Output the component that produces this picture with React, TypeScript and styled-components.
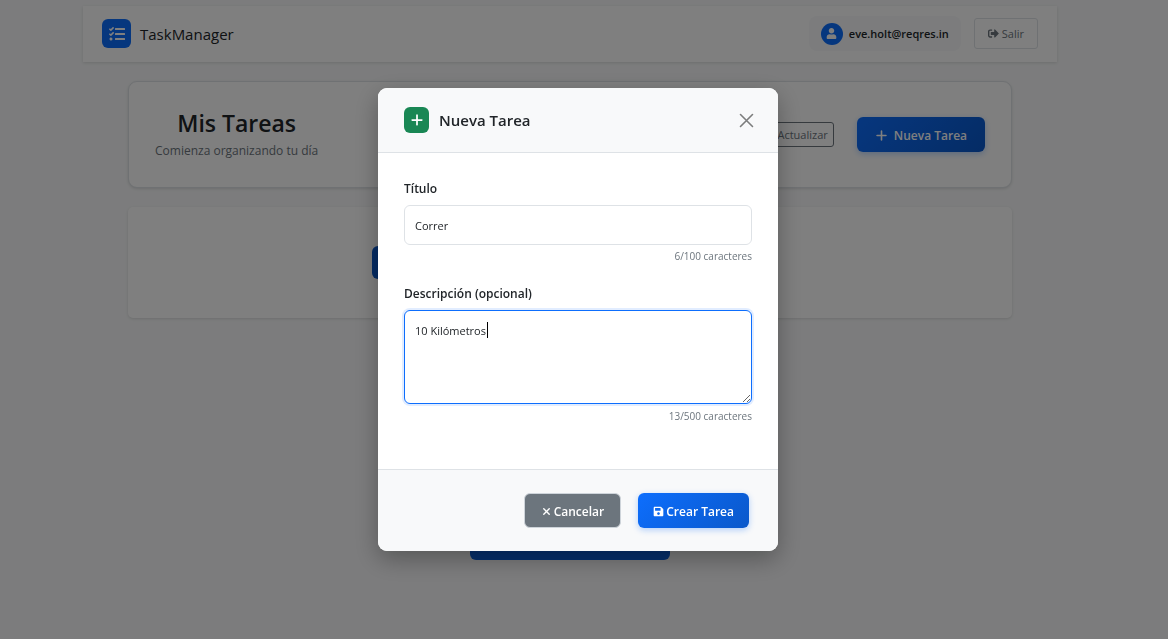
import { useEffect, useRef, useState } from "react";
import styled, { createGlobalStyle } from "styled-components";
import { FaSave, FaSignOutAlt, FaSyncAlt, FaTasks, FaUser } from "react-icons/fa";
import { FaPlus, FaXmark } from "react-icons/fa6";

const GlobalStyle = createGlobalStyle`
  *, *::before, *::after { box-sizing: border-box; }
  body {
    margin: 0;
    background: #f8f9fa;
    color: #212529;
    font-family: "Open Sans", "Noto Sans", sans-serif;
    font-size: 12px;
    line-height: 20px;
  }
  h1, h2, p { margin: 0; }
  button, input, textarea { font: inherit; color: inherit; }
  button { cursor: pointer; white-space: nowrap; }
`;

const Page = styled.div`
  min-height: 100vh;
  padding: 6px 28px 0 0;
`;

const TopBar = styled.header`
  display: flex;
  align-items: center;
  justify-content: space-between;
  max-width: 974px;
  margin: 0 auto 19px;
  padding: 10px 19px 11px;
  background: #fff;
  box-shadow: 0 1px 3px rgba(0, 0, 0, 0.12);
`;

const Group = styled.div<{ $gap: number }>`
  display: flex;
  align-items: center;
  gap: ${(p) => p.$gap}px;
`;

const LogoMark = styled.span`
  display: grid;
  place-items: center;
  width: 29px;
  height: 29px;
  border-radius: 6px;
  background: #0d6efd;
  color: #fff;
  font-size: 16px;
`;

const Brand = styled.span`
  padding-top: 1px;
  font-size: 15px;
  font-weight: 500;
`;

const UserPill = styled.div`
  display: flex;
  align-items: center;
  gap: 6px;
  height: 35px;
  padding: 0 12px;
  border-radius: 8px;
  background: #f8f9fa;
  font-size: 11px;
  font-weight: 600;
`;

const Avatar = styled.span`
  display: grid;
  place-items: center;
  width: 22px;
  height: 22px;
  border-radius: 50%;
  background: #0d6efd;
  color: #fff;
  font-size: 11px;
`;

const LogoutButton = styled.button`
  display: flex;
  align-items: center;
  gap: 3px;
  height: 31px;
  padding: 0 13px;
  border: 1px solid #dee2e6;
  border-radius: 3px;
  background: transparent;
  color: #6c757d;
  font-size: 11px;
`;

const Main = styled.main`
  max-width: 884px;
  margin: 0 auto;
`;

const HeroCard = styled.section`
  display: flex;
  align-items: center;
  justify-content: space-between;
  min-height: 107px;
  padding: 0 26px;
  border: 1px solid #dee2e6;
  border-radius: 9px;
  background: #fff;
  box-shadow: 0 1px 3px rgba(0, 0, 0, 0.12);
`;

const HeroTitle = styled.h1`
  font-size: 23px;
  font-weight: 600;
  line-height: 32px;
  text-align: center;
`;

const HeroText = styled.p`
  color: #6c757d;
  font-size: 12px;
  line-height: 24px;
`;

const RefreshButton = styled.button`
  display: flex;
  align-items: center;
  gap: 4px;
  height: 25px;
  padding: 0 5px;
  border: 1px solid #6c757d;
  border-radius: 3px;
  background: transparent;
  color: #6c757d;
  font-size: 11px;
`;

const ActionButton = styled.button<{ $tone?: "muted"; $pad: number; $gap: number }>`
  display: flex;
  align-items: center;
  gap: ${(p) => p.$gap}px;
  height: 35px;
  padding: 2px ${(p) => p.$pad}px 0;
  border: ${(p) => (p.$tone ? "1px solid #ced4da" : "0")};
  border-radius: 6px;
  background: ${(p) => (p.$tone ? "#6c757d" : "linear-gradient(135deg, #0d6efd, #0a58ca)")};
  box-shadow: ${(p) => (p.$tone ? "none" : "0 2px 6px rgba(13, 110, 253, 0.3)")};
  color: #fff;
  font-size: 12px;
  font-weight: 600;
`;

const FilterCard = styled.section`
  display: flex;
  align-items: center;
  justify-content: center;
  min-height: 111px;
  margin-top: 19px;
  border-radius: 5px;
  background: #fff;
  box-shadow: 0 1px 3px rgba(0, 0, 0, 0.12);
`;

const FilterTab = styled.button<{ $active?: boolean }>`
  width: 132px;
  height: 33px;
  border: 0;
  border-radius: 6px;
  background: ${(p) => (p.$active ? "#0a58ca" : "transparent")};
`;

const EmptyState = styled.section`
  display: flex;
  justify-content: center;
  padding-top: 207px;
`;

const WideButton = styled.button`
  width: 200px;
  height: 35px;
  border: 0;
  border-radius: 6px;
  background: #0b60dc;
`;

const Backdrop = styled.div`
  position: fixed;
  inset: 0;
  display: flex;
  align-items: center;
  justify-content: center;
  padding: 0 24px 0 12px;
  background: rgba(0, 0, 0, 0.5);
`;

const Dialog = styled.form`
  width: 100%;
  max-width: 400px;
  overflow: hidden;
  border-radius: 9px;
  background: #fff;
  box-shadow: 0 8px 24px rgba(0, 0, 0, 0.3);
`;

const DialogHeader = styled.div`
  display: flex;
  align-items: center;
  justify-content: space-between;
  min-height: 65px;
  padding: 0 24px 0 26px;
  border-bottom: 1px solid #dee2e6;
  background: #f8f9fa;
`;

const AddMark = styled.span`
  display: grid;
  place-items: center;
  width: 25px;
  height: 26px;
  border-radius: 6px;
  background: #198754;
  color: #fff;
  font-size: 14px;
`;

const DialogTitle = styled.h2`
  font-size: 15px;
  font-weight: 600;
`;

const CloseButton = styled.button`
  display: grid;
  place-items: center;
  padding: 0;
  border: 0;
  background: transparent;
  color: #7c7d7d;
`;

const DialogBody = styled.div`
  display: flex;
  flex-direction: column;
  gap: 20px;
  padding: 26px 26px 45px;
`;

const Field = styled.div`
  display: flex;
  flex-direction: column;
`;

const Label = styled.label`
  margin-bottom: 6px;
  font-weight: 600;
`;

const TextInput = styled.input`
  width: 100%;
  height: 40px;
  padding: 0 10px;
  border: 1px solid #dee2e6;
  border-radius: 6px;
  outline: 0;
  background: #fff;
  font-size: 11px;
`;

const AreaWrap = styled.div`
  position: relative;
  display: flex;
  margin-bottom: 1px;
`;

const TextArea = styled.textarea`
  width: 100%;
  height: 94px;
  padding: 10px;
  border: 1px solid #0d6efd;
  border-radius: 6px;
  outline: 0;
  background: #fff;
  box-shadow: 0 0 0 2px rgba(13, 110, 253, 0.12);
  caret-color: transparent;
  font-size: 11px;
  resize: vertical;
`;

const Caret = styled.span`
  position: absolute;
  top: 12px;
  left: 83px;
  width: 1px;
  height: 16px;
  background: #000;
`;

const Counter = styled.span`
  margin-top: 3px;
  color: #6c757d;
  font-size: 10px;
  line-height: 16px;
  text-align: right;
`;

const DialogFooter = styled.div`
  display: flex;
  justify-content: flex-end;
  gap: 17px;
  padding: 23px 29px;
  border-top: 1px solid #dee2e6;
  background: #f8f9fa;
`;

export default function App() {
  const [title, setTitle] = useState("Correr");
  const [description, setDescription] = useState("10 Kilómetros");
  const area = useRef<HTMLTextAreaElement>(null);

  useEffect(() => {
    const el = area.current;
    if (!el) return;
    el.focus();
    el.setSelectionRange(el.value.length, el.value.length);
  }, []);

  return (
    <>
      <GlobalStyle />
      <Page>
        <TopBar>
          <Group $gap={9}>
            <LogoMark><FaTasks /></LogoMark>
            <Brand>TaskManager</Brand>
          </Group>
          <Group $gap={13}>
            <UserPill>
              <Avatar><FaUser /></Avatar>
              eve.holt@reqres.in
            </UserPill>
            <LogoutButton type="button"><FaSignOutAlt /> Salir</LogoutButton>
          </Group>
        </TopBar>
        <Main>
          <HeroCard>
            <div>
              <HeroTitle>Mis Tareas</HeroTitle>
              <HeroText>Comienza organizando tu día</HeroText>
            </div>
            <Group $gap={23}>
              <RefreshButton type="button"><FaSyncAlt /> Actualizar</RefreshButton>
              <ActionButton type="button" $pad={18} $gap={6}><FaPlus size={13} /> Nueva Tarea</ActionButton>
            </Group>
          </HeroCard>
          <FilterCard>
            <FilterTab type="button" aria-label="Todas" $active />
            <FilterTab type="button" aria-label="Pendientes" />
            <FilterTab type="button" aria-label="Completadas" />
          </FilterCard>
          <EmptyState>
            <WideButton type="button" aria-label="Crear primera tarea" />
          </EmptyState>
        </Main>
      </Page>
      <Backdrop>
        <Dialog role="dialog" aria-modal="true" aria-labelledby="dialog-title" onSubmit={(e) => e.preventDefault()}>
          <DialogHeader>
            <Group $gap={10}>
              <AddMark><FaPlus /></AddMark>
              <DialogTitle id="dialog-title">Nueva Tarea</DialogTitle>
            </Group>
            <CloseButton type="button" aria-label="Cerrar">
              <svg width="15" height="15" viewBox="0 0 15 15" fill="none" stroke="currentColor" strokeWidth="1.6" strokeLinecap="round">
                <path d="M1.5 1.5l12 12M13.5 1.5l-12 12" />
              </svg>
            </CloseButton>
          </DialogHeader>
          <DialogBody>
            <Field>
              <Label htmlFor="title">Título</Label>
              <TextInput id="title" type="text" maxLength={100} value={title} onChange={(e) => setTitle(e.target.value)} />
              <Counter>{title.length}/100 caracteres</Counter>
            </Field>
            <Field>
              <Label htmlFor="description">Descripción (opcional)</Label>
              <AreaWrap>
                <TextArea id="description" ref={area} maxLength={500} value={description} onChange={(e) => setDescription(e.target.value)} />
                {description === "10 Kilómetros" && <Caret aria-hidden="true" />}
              </AreaWrap>
              <Counter>{description.length}/500 caracteres</Counter>
            </Field>
          </DialogBody>
          <DialogFooter>
            <ActionButton type="button" $tone="muted" $pad={16} $gap={2}><FaXmark size={11} /> Cancelar</ActionButton>
            <ActionButton type="submit" $pad={15} $gap={2}><FaSave size={11} /> Crear Tarea</ActionButton>
          </DialogFooter>
        </Dialog>
      </Backdrop>
    </>
  );
}
